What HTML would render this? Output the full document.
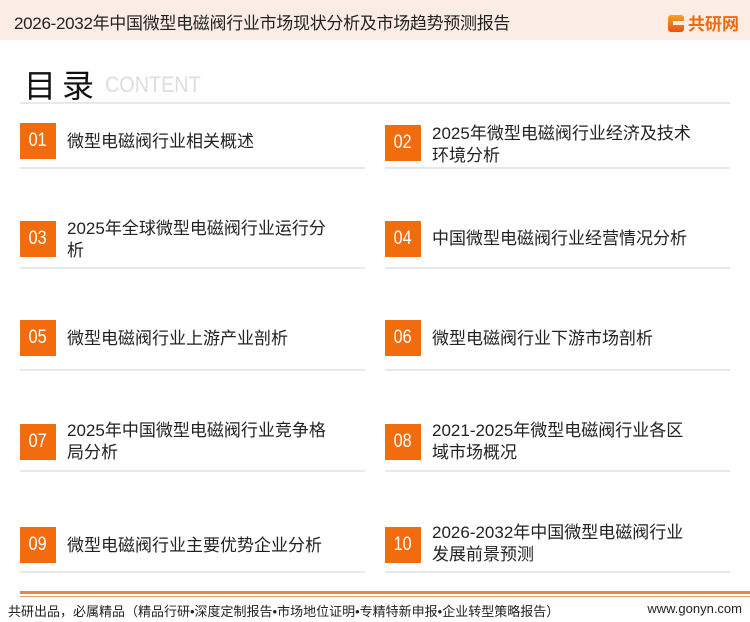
<!DOCTYPE html>
<html><head><meta charset="utf-8"><style>
*{margin:0;padding:0;box-sizing:border-box}
body{width:750px;height:622px;background:#fff;position:relative;overflow:hidden;font-family:"Liberation Sans","Noto Sans CJK SC",sans-serif;color:#222}
.hd{position:absolute;left:0;top:0;width:750px;height:40px;background:#fbede6}
.hd .t{position:absolute;left:14px;top:9px;font-size:17px;letter-spacing:-0.3px;color:#222}
.logo{position:absolute;left:668px;top:10px;font-size:17px;font-weight:bold;color:#ee6a10}
.logo .g{display:inline-block;width:16px;height:17px;background:linear-gradient(#f6a321,#e9521a);border-radius:3px;vertical-align:-2px;margin-right:4px;position:relative}
.logo .g:after{content:"";position:absolute;left:5px;top:6px;width:11px;height:4px;background:#fbede6}
.h1{position:absolute;left:24px;top:61px;font-size:32px;letter-spacing:6px;color:#111}
.h2{position:absolute;left:105px;top:72px;font-size:22px;color:#ddd;transform:scaleX(0.9);transform-origin:left}
.hl{position:absolute;left:20px;top:102px;width:710px;height:2px;background:#e8e8e8}
.box{position:absolute;width:36px;height:36px;background:#f26b0c;color:#fff;font-size:19px;text-align:center;line-height:36px}
.box span{display:inline-block;transform:scaleX(0.85)}
.tx{position:absolute;font-size:17px;line-height:22px;color:#222}
.ln{position:absolute;height:2px;width:345px;background:#e8e8e8}
.f1{position:absolute;left:20px;top:591px;width:730px;height:3px;background:#e9874a}
.f2{position:absolute;left:20px;top:596px;width:730px;height:1px;background:#e9a070}
.ft{position:absolute;left:8px;top:601px;font-size:13px;color:#222}
.fr{position:absolute;right:8px;top:601px;font-size:13px;color:#222}
</style></head><body>
<div class="hd"><div class="t">2026-2032年中国微型电磁阀行业市场现状分析及市场趋势预测报告</div>
<div class="logo"><span class="g"></span>共研网</div></div>
<div class="h1">目录</div><div class="h2">CONTENT</div><div class="hl"></div>

<div class="box" style="left:20px;top:123px"><span>01</span></div><div class="tx" style="left:67px;top:131px">微型电磁阀行业相关概述</div>
<div class="box" style="left:385px;top:125px"><span>02</span></div><div class="tx" style="left:432px;top:123px">2025年微型电磁阀行业经济及技术<br>环境分析</div>
<div class="ln" style="left:20px;top:167px"></div><div class="ln" style="left:385px;top:167px"></div>

<div class="box" style="left:20px;top:221px"><span>03</span></div><div class="tx" style="left:67px;top:218px">2025年全球微型电磁阀行业运行分<br>析</div>
<div class="box" style="left:385px;top:221px"><span>04</span></div><div class="tx" style="left:432px;top:228px">中国微型电磁阀行业经营情况分析</div>
<div class="ln" style="left:20px;top:267px"></div><div class="ln" style="left:385px;top:267px"></div>

<div class="box" style="left:20px;top:320px"><span>05</span></div><div class="tx" style="left:67px;top:328px">微型电磁阀行业上游产业剖析</div>
<div class="box" style="left:385px;top:320px"><span>06</span></div><div class="tx" style="left:432px;top:328px">微型电磁阀行业下游市场剖析</div>
<div class="ln" style="left:20px;top:369px"></div><div class="ln" style="left:385px;top:369px"></div>

<div class="box" style="left:20px;top:424px"><span>07</span></div><div class="tx" style="left:67px;top:420px">2025年中国微型电磁阀行业竞争格<br>局分析</div>
<div class="box" style="left:385px;top:424px"><span>08</span></div><div class="tx" style="left:432px;top:420px">2021-2025年微型电磁阀行业各区<br>域市场概况</div>
<div class="ln" style="left:20px;top:470px"></div><div class="ln" style="left:385px;top:470px"></div>

<div class="box" style="left:20px;top:527px"><span>09</span></div><div class="tx" style="left:67px;top:535px">微型电磁阀行业主要优势企业分析</div>
<div class="box" style="left:385px;top:527px"><span>10</span></div><div class="tx" style="left:432px;top:522px">2026-2032年中国微型电磁阀行业<br>发展前景预测</div>
<div class="ln" style="left:20px;top:571px"></div><div class="ln" style="left:385px;top:571px"></div>

<div class="f1"></div><div class="f2"></div>
<div class="ft">共研出品，必属精品（精品行研•深度定制报告•市场地位证明•专精特新申报•企业转型策略报告）</div>
<div class="fr">www.gonyn.com</div>
</body></html>
